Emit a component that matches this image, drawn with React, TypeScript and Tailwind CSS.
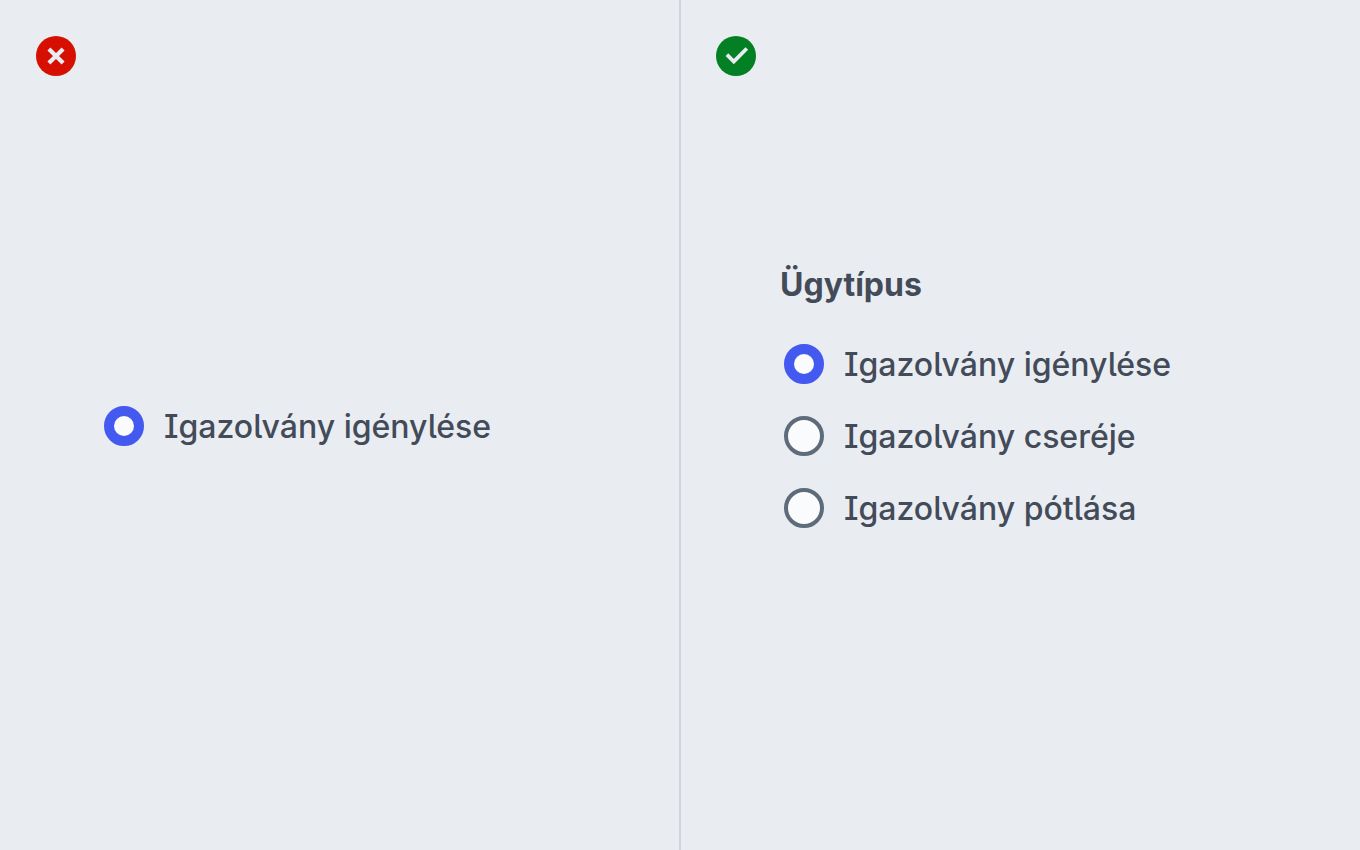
import React, { useState } from 'react';

interface RadioOptionProps {
  name: string;
  label: string;
  checked: boolean;
  onSelect: () => void;
}

const options = ['Igazolvány igénylése', 'Igazolvány cseréje', 'Igazolvány pótlása'];

const RadioOption: React.FC<RadioOptionProps> = ({ name, label, checked, onSelect }) => (
  <label className="flex cursor-pointer items-center gap-5 pl-1">
    <input
      type="radio"
      name={name}
      checked={checked}
      onChange={onSelect}
      className="size-10 shrink-0 cursor-pointer appearance-none rounded-full border-4 border-[#5e6b7b] bg-[#fafbfd] checked:border-10 checked:border-[#4459f0]"
    />
    <span className="pt-0.5 text-[32px] leading-[46px] font-[450]">{label}</span>
  </label>
);

const WrongIcon = () => (
  <svg className="size-10" viewBox="0 0 40 40" aria-hidden="true">
    <circle cx="20" cy="20" r="20" fill="#d60f00" />
    <path d="M12.9 12.9L27.1 27.1M27.1 12.9L12.9 27.1" fill="none" stroke="#e9edf2" strokeWidth="4.2" />
  </svg>
);

const RightIcon = () => (
  <svg className="size-10" viewBox="0 0 40 40" aria-hidden="true">
    <circle cx="20" cy="20" r="20" fill="#037f24" />
    <path d="M10.9 18.6L17.8 25.5L30.8 12.5" fill="none" stroke="#e9edf2" strokeWidth="3.8" />
  </svg>
);

const Panel: React.FC<{ icon: React.ReactNode; children: React.ReactNode }> = ({ icon, children }) => (
  <section className="grid min-h-screen grid-rows-[1fr_auto_1fr] px-9">
    <div className="pt-9">{icon}</div>
    <div className="pt-0.5 pl-16">{children}</div>
  </section>
);

export default function App() {
  const [single, setSingle] = useState(true);
  const [selected, setSelected] = useState(options[0]);

  return (
    <main className="relative grid min-h-screen grid-cols-2 bg-[#e9edf2] font-['Inter',sans-serif] text-[#434b59] [font-feature-settings:'cv05','cv08']">
      <Panel icon={<WrongIcon />}>
        <RadioOption
          name="single"
          label={options[0]}
          checked={single}
          onSelect={() => setSingle(true)}
        />
      </Panel>

      <Panel icon={<RightIcon />}>
        <fieldset className="pb-15">
          <legend className="mb-8 pt-0.5 text-[32px] leading-[46px] font-bold">Ügytípus</legend>
          <div className="flex flex-col gap-6">
            {options.map((option) => (
              <RadioOption
                key={option}
                name="case-type"
                label={option}
                checked={selected === option}
                onSelect={() => setSelected(option)}
              />
            ))}
          </div>
        </fieldset>
      </Panel>

      {/* Divider between the two examples */}
      <div className="absolute inset-y-0 left-1/2 w-0.5 -translate-x-1/2 bg-[#d0d5dc]" />
    </main>
  );
}
